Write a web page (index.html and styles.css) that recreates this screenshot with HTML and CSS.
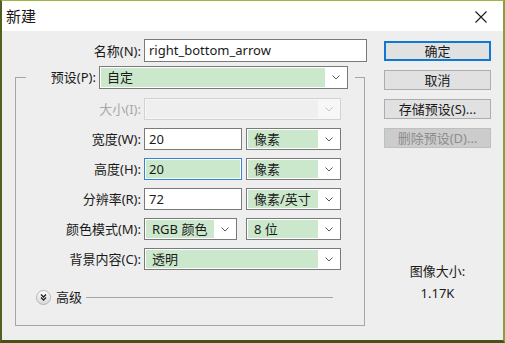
FILE: index.html
```html
<!DOCTYPE html>
<html lang="zh-CN">

<head>
    <meta charset="UTF-8">
    <title>新建</title>
    <link rel="stylesheet" href="styles.css">
</head>

<body>
    <div class="window">
        <div class="titlebar">
            <span class="title">新建</span>
            <span class="close">
                <svg width="12" height="12" viewBox="0 0 12 12"><path d="M0.5 0.5 L11.5 11.5 M11.5 0.5 L0.5 11.5" stroke="#1a1a1a" stroke-width="1.1" fill="none"/></svg>
            </span>
        </div>

        <div class="dialog-body">
            <div class="main">
                <div class="row name-row">
                    <span class="lbl name-lbl">名称(N):</span>
                    <div class="field name-field">right_bottom_arrow</div>
                </div>

                <fieldset class="group">
                    <legend class="legend">
                        <div class="legend-inner">
                            <span class="lbl preset-lbl">预设(P):</span>
                            <div class="combo preset-combo">
                                <span class="val">自定</span>
                                <span class="arrow"><svg width="8" height="5" viewBox="0 0 8 5"><path d="M0.5 0.5 L4 4 L7.5 0.5" stroke="#5a5a5a" fill="none"/></svg></span>
                            </div>
                        </div>
                    </legend>

                    <div class="rows">
                        <div class="row">
                            <span class="lbl disabled">大小(I):</span>
                            <div class="combo combo-wide combo-disabled">
                                <span class="val"></span>
                                <span class="arrow"><svg width="8" height="5" viewBox="0 0 8 5"><path d="M0.5 0.5 L4 4 L7.5 0.5" stroke="#c4c4c4" fill="none"/></svg></span>
                            </div>
                        </div>
                        <div class="row">
                            <span class="lbl">宽度(W):</span>
                            <div class="field num-field">20</div>
                            <div class="combo unit-combo">
                                <span class="val">像素</span>
                                <span class="arrow"><svg width="8" height="5" viewBox="0 0 8 5"><path d="M0.5 0.5 L4 4 L7.5 0.5" stroke="#5a5a5a" fill="none"/></svg></span>
                            </div>
                        </div>
                        <div class="row">
                            <span class="lbl">高度(H):</span>
                            <div class="field num-field focused">20</div>
                            <div class="combo unit-combo">
                                <span class="val">像素</span>
                                <span class="arrow"><svg width="8" height="5" viewBox="0 0 8 5"><path d="M0.5 0.5 L4 4 L7.5 0.5" stroke="#5a5a5a" fill="none"/></svg></span>
                            </div>
                        </div>
                        <div class="row">
                            <span class="lbl">分辨率(R):</span>
                            <div class="field num-field">72</div>
                            <div class="combo unit-combo">
                                <span class="val">像素/英寸</span>
                                <span class="arrow"><svg width="8" height="5" viewBox="0 0 8 5"><path d="M0.5 0.5 L4 4 L7.5 0.5" stroke="#5a5a5a" fill="none"/></svg></span>
                            </div>
                        </div>
                        <div class="row">
                            <span class="lbl">颜色模式(M):</span>
                            <div class="combo mode-combo">
                                <span class="val">RGB 颜色</span>
                                <span class="arrow"><svg width="8" height="5" viewBox="0 0 8 5"><path d="M0.5 0.5 L4 4 L7.5 0.5" stroke="#5a5a5a" fill="none"/></svg></span>
                            </div>
                            <div class="combo unit-combo">
                                <span class="val">8 位</span>
                                <span class="arrow"><svg width="8" height="5" viewBox="0 0 8 5"><path d="M0.5 0.5 L4 4 L7.5 0.5" stroke="#5a5a5a" fill="none"/></svg></span>
                            </div>
                        </div>
                        <div class="row">
                            <span class="lbl">背景内容(C):</span>
                            <div class="combo combo-wide">
                                <span class="val">透明</span>
                                <span class="arrow"><svg width="8" height="5" viewBox="0 0 8 5"><path d="M0.5 0.5 L4 4 L7.5 0.5" stroke="#5a5a5a" fill="none"/></svg></span>
                            </div>
                        </div>
                    </div>

                    <div class="advanced">
                        <span class="adv-icon">
                            <svg width="15" height="15" viewBox="0 0 15 15">
                                <defs>
                                    <linearGradient id="advg" x1="0" y1="0" x2="0" y2="1">
                                        <stop offset="0" stop-color="#ffffff"/>
                                        <stop offset="1" stop-color="#d6d6d6"/>
                                    </linearGradient>
                                </defs>
                                <circle cx="7.5" cy="7.5" r="7" fill="url(#advg)" stroke="#b4b4b4"/>
                                <path d="M5 4.5 L7.5 7 L10 4.5 M5 7.5 L7.5 10 L10 7.5" stroke="#222" stroke-width="1.3" fill="none"/>
                            </svg>
                        </span>
                        <span class="adv-text">高级</span>
                        <span class="adv-line"></span>
                    </div>
                </fieldset>
            </div>

            <div class="side">
                <div class="btn btn-default">确定</div>
                <div class="btn">取消</div>
                <div class="btn">存储预设(S)...</div>
                <div class="btn btn-disabled">删除预设(D)...</div>

                <div class="info-title">图像大小:</div>
                <div class="info-value">1.17K</div>
            </div>
        </div>
    </div>
</body>

</html>
```

FILE: styles.css
```css
body {
    margin: 0;
    padding: 0;
    font-family: "Noto Sans", "Noto Sans CJK SC", sans-serif;
    font-size: 13px;
    color: #1a1a1a;
}

.window {
    width: 505px;
    height: 343px;
    box-sizing: border-box;
    border-top: 1px solid #9cb83e;
    border-left: 2px solid #4f6021;
    border-right: 2px solid #86a236;
    border-bottom: 3px solid #445419;
    background-color: #eeeeee;
}

.titlebar {
    height: 30px;
    background-color: white;
    display: flex;
    align-items: center;
    justify-content: space-between;
    padding: 0 16px 0 4px;
}

.title {
    font-family: "Noto Sans CJK SC", sans-serif;
    font-size: 15px;
    line-height: 30px;
}

.close {
    display: flex;
    width: 12px;
    height: 12px;
    margin-top: 1px;
}

.dialog-body {
    display: flex;
    padding: 8px 0 0 13px;
}

.main {
    width: 352px;
}

.row {
    display: flex;
    align-items: center;
    height: 22px;
}

.lbl {
    width: 125px;
    margin-right: 3px;
    text-align: right;
    white-space: nowrap;
    line-height: 22px;
}

.lbl.disabled {
    color: #a8a8a8;
}

.name-row {
    height: 23px;
}

.name-lbl {
    width: 126px;
}

.field {
    box-sizing: border-box;
    height: 22px;
    border: 1px solid #7a7a7a;
    background-color: white;
    padding-left: 4px;
    line-height: 20px;
    white-space: nowrap;
    overflow: hidden;
}

.name-field {
    width: 223px;
    height: 23px;
    line-height: 21px;
}

.num-field {
    width: 98px;
    margin-right: 4px;
}

.num-field.focused {
    border-color: #2f86d0;
    background-color: #cce8cc;
    box-shadow: inset 0 0 0 1px #ffffff;
}

.combo {
    box-sizing: border-box;
    height: 22px;
    border: 1px solid #7a7a7a;
    background-color: white;
    display: flex;
    padding: 1px;
}

.combo .val {
    flex: 1;
    background-color: #cce8cc;
    padding-left: 6px;
    line-height: 18px;
    white-space: nowrap;
}

.combo .arrow {
    width: 21px;
    display: flex;
    align-items: center;
    justify-content: center;
}

.combo-wide {
    width: 197px;
}

.unit-combo {
    width: 95px;
}

.mode-combo {
    width: 93px;
    margin-right: 9px;
}

.combo-disabled {
    border-color: #d2d2d2;
    background-color: #f7f7f7;
}

.combo-disabled .val {
    background-color: #efefef;
}

.group {
    width: 350px;
    box-sizing: border-box;
    margin: 4px 0 0 0;
    padding: 0 0 20px 0;
    border: 1px solid #a6a6a6;
    min-inline-size: 0;
}

.legend {
    margin-left: 10px;
    padding: 0 7px 0 0;
}

.legend-inner {
    display: flex;
    align-items: center;
    height: 23px;
}

.preset-lbl {
    width: 70px;
    line-height: 23px;
}

.preset-combo {
    width: 249px;
    height: 23px;
}

.preset-combo .val {
    line-height: 19px;
}

.rows {
    display: flex;
    flex-direction: column;
    gap: 8px;
    padding-top: 9px;
}

.advanced {
    display: flex;
    align-items: center;
    height: 16px;
    margin-top: 19px;
    padding-left: 20px;
}

.adv-icon {
    display: flex;
    width: 15px;
    height: 15px;
}

.adv-text {
    margin-left: 5px;
    line-height: 16px;
}

.adv-line {
    width: 247px;
    height: 0;
    border-top: 1px solid #a6a6a6;
    margin-left: 4px;
    margin-top: 1px;
}

.side {
    width: 107px;
    margin-left: 17px;
    padding-top: 2px;
    display: flex;
    flex-direction: column;
}

.btn {
    box-sizing: border-box;
    height: 20px;
    margin-bottom: 9px;
    border: 1px solid #adadad;
    background-color: #e1e1e1;
    text-align: center;
    line-height: 18px;
    white-space: nowrap;
}

.btn-default {
    border: 2px solid #0e78d2;
    line-height: 16px;
}

.btn-disabled {
    border-color: #bfbfbf;
    background-color: #cccccc;
    color: #8c8c8c;
}

.info-title {
    margin-top: 105px;
    text-align: center;
    line-height: 18px;
}

.info-value {
    margin-top: 4px;
    text-align: center;
    line-height: 18px;
}
```
